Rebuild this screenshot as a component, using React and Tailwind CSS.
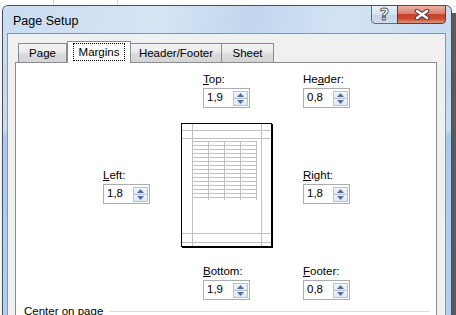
import React from 'react';

const Arrow = ({ up }) => (
  <svg width="7" height="4" viewBox="0 0 7 4" className="block">
    {up ? <path d="M0 4 L3.5 0 L7 4 Z" fill="#4d6fae" /> : <path d="M0 0 L3.5 4 L7 0 Z" fill="#4d6fae" />}
  </svg>
);

const Spinner = ({ value }) => (
  <div className="w-[47px] h-[20px] border border-[#abadb3] bg-white flex items-center">
    <span className="flex-1 pl-[3px] leading-none">{value}</span>
    <div className="w-[15px] mr-[1px] flex flex-col">
      <div className="h-[8px] border border-[#b7c3d3] bg-[linear-gradient(#f4f7fb,#dfe7f2)] flex items-center justify-center">
        <Arrow up />
      </div>
      <div className="h-[8px] -mt-px border border-[#b7c3d3] bg-[linear-gradient(#f4f7fb,#dfe7f2)] flex items-center justify-center">
        <Arrow />
      </div>
    </div>
  </div>
);

const Field = ({ u, rest, pre = '', value, className = '' }) => (
  <div className={`flex flex-col gap-[2px] ${className}`}>
    <div className="h-[14px] leading-[14px]">
      {pre}
      <span className="underline underline-offset-[1px]">{u}</span>
      {rest}
    </div>
    <Spinner value={value} />
  </div>
);

const PagePreview = () => {
  const cols = [11, 27, 43, 59, 75];
  const rows = [];
  for (let y = 18; y <= 76; y += 4) rows.push(y);
  return (
    <svg width="93" height="126" viewBox="0 0 93 126" className="block">
      <rect x="1" y="1" width="91" height="124" fill="#000" />
      <rect x="0" y="0" width="91" height="124" fill="#fff" />
      <g stroke="#c0c0c0" strokeWidth="1">
        <line x1="11.5" y1="1" x2="11.5" y2="123" />
        <line x1="80.5" y1="1" x2="80.5" y2="123" />
        <line x1="1" y1="7.5" x2="90" y2="7.5" />
        <line x1="1" y1="15.5" x2="90" y2="15.5" />
        <line x1="1" y1="110.5" x2="90" y2="110.5" />
        <line x1="1" y1="119.5" x2="90" y2="119.5" />
        {cols.map((x) => (
          <line key={'c' + x} x1={x + 0.5} y1="18" x2={x + 0.5} y2="77" />
        ))}
        {rows.map((y) => (
          <line key={'r' + y} x1="11" y1={y + 0.5} x2="76" y2={y + 0.5} />
        ))}
      </g>
      <rect x="0.5" y="0.5" width="90" height="123" fill="none" stroke="#000" />
    </svg>
  );
};

const Tab = ({ children, className = '', selected }) => (
  <div
    className={`flex items-center justify-center border border-b-0 border-[#898c95] ${
      selected
        ? 'h-[22px] bg-white -mb-px relative z-10'
        : 'h-[19px] bg-[linear-gradient(#f3f3f3,#ebebeb_45%,#dddddd_50%,#d3d3d3)]'
    } ${className}`}
  >
    {children}
  </div>
);

export default function App() {
  return (
    <div className="w-[456px] h-[315px] overflow-hidden bg-white flex flex-col text-[11.5px] text-black font-['Liberation_Sans',Arial,sans-serif]">
      <div className="h-[5px] shrink-0 bg-[linear-gradient(90deg,transparent_53px,#d4d4d4_53px,#d4d4d4_54px,transparent_54px,transparent_117px,#d4d4d4_117px,#d4d4d4_118px,transparent_118px)]" />
      <div className="flex flex-1 min-h-0">
        <div className="w-[2px] bg-[#f4f4f4]" />
        <div className="w-[450px] h-[310px] overflow-hidden border border-b-0 border-[#44505e] rounded-t-[6px] bg-[linear-gradient(180deg,#d3e3f4_0%,#c5d9ef_25%,#c9ddf1_40%,#a9cbee_42%,#b2d1f0_100%)] flex flex-col pl-[4px] pr-[5px]">
          <div className="h-[27px] shrink-0 flex items-start justify-between bg-[linear-gradient(100deg,#cadcf0_0%,#d6e5f4_35%,#c1d6ee_55%,#d3e3f3_75%,#c8dbef_100%)] -mx-[4px] -mr-[5px] pl-[10px] pr-[5px]">
            <span className="text-[12.5px] leading-none mt-[9px]">Page Setup</span>
            <div className="flex -mt-px">
              <div className="w-[27px] h-[19px] border border-[#5d6e82] rounded-bl-[4px] bg-[linear-gradient(#e8eff8,#d5e2f0_50%,#c4d4e8_52%,#d2deec)] flex items-center justify-center">
                <span className="font-bold text-[16px] leading-none text-white [-webkit-text-stroke:0.9px_#4a5563] font-['DejaVu_Sans',sans-serif]">?</span>
              </div>
              <div className="w-[49px] h-[19px] -ml-px border border-[#5d3a34] rounded-br-[4px] bg-[linear-gradient(#eab2a6,#dc7f6b_45%,#c7442d_50%,#c84a31_75%,#e39a7f)] flex items-center justify-center">
                <svg width="16" height="11" viewBox="0 0 16 11">
                  <path d="M3 2 L13 9 M13 2 L3 9" stroke="#5a3a36" strokeWidth="4.5" strokeLinecap="round" />
                  <path d="M3 2 L13 9 M13 2 L3 9" stroke="#fff" strokeWidth="2.4" strokeLinecap="round" />
                </svg>
              </div>
            </div>
          </div>
          <div className="flex-1 min-h-0 border border-b-0 border-[#8396ab] bg-[#f0f0f0] pt-[7px] pl-[7px] pr-[8px] flex flex-col">
            <div className="flex items-end h-[21px] shrink-0 pl-[3px]">
              <Tab className="w-[49px] pt-[1px]">Page</Tab>
              <Tab selected className="w-[64px]">
                <span className="border border-dotted border-black px-[5px] h-[18px] leading-[16px] -mt-[2px]">Margins</span>
              </Tab>
              <Tab className="w-[92px] -ml-px pt-[1px]">Header/Footer</Tab>
              <Tab className="w-[53px] -ml-px pt-[1px]">Sheet</Tab>
            </div>
            <div className="flex-1 shrink-0 border border-b-0 border-[#898c95] bg-white pt-[9px] flex flex-col">
              <div className="flex shrink-0">
                <Field className="ml-[187px] w-[47px]" u="T" rest="op:" value="1,9" />
                <Field className="ml-[53px] w-[47px]" pre="He" u="a" rest="der:" value="0,8" />
              </div>
              <div className="flex shrink-0 items-center mt-[15px]">
                <Field className="ml-[87px] w-[47px]" u="L" rest="eft:" value="1,8" />
                <div className="ml-[31px]">
                  <PagePreview />
                </div>
                <Field className="ml-[29px] w-[47px]" u="R" rest="ight:" value="1,8" />
              </div>
              <div className="flex shrink-0 mt-[15px]">
                <Field className="ml-[187px] w-[47px]" u="B" rest="ottom:" value="1,9" />
                <Field className="ml-[53px] w-[47px]" u="F" rest="ooter:" value="0,8" />
              </div>
              <div className="flex shrink-0 items-center mt-[4px] pl-[8px] pr-[6px]">
                <span className="leading-[14px]">Center on page</span>
                <div className="flex-1 h-px bg-[#d5dfe5] ml-[6px]" />
              </div>
            </div>
          </div>
        </div>
        <div className="flex-1 bg-[linear-gradient(#f4f4f4_0px,#f4f4f4_8px,#5a5a5a_8px)]" />
      </div>
    </div>
  );
}
